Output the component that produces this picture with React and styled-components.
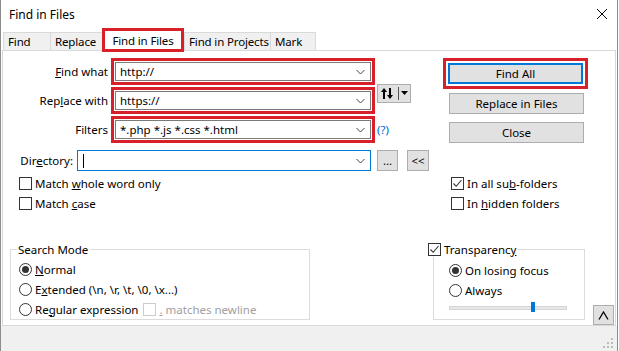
import React from 'react'
import styled, { createGlobalStyle, css } from 'styled-components'

const GlobalStyle = createGlobalStyle`
  html, body {
    margin: 0;
    padding: 0;
    background: #fff;
  }
  body {
    font-family: "Noto Sans", "Open Sans", sans-serif;
    font-size: 11.5px;
    color: #000;
  }
`

const RED = '#d7202a'

const Window = styled.div`
  width: 618px;
  height: 351px;
  box-sizing: border-box;
  border-left: 1px solid #8c8c8c;
  border-right: 1px solid #8c8c8c;
  display: flex;
  flex-direction: column;
  background: #fff;
  overflow: hidden;
`

const TitleBar = styled.div`
  height: 28px;
  flex: none;
  display: flex;
  align-items: center;
  justify-content: space-between;
  padding: 0 9px 0 8px;
  font-size: 12px;
`

const TabStrip = styled.div`
  height: 22px;
  flex: none;
  display: flex;
  align-items: flex-end;
  padding-left: 2px;
`

const Tab = styled.div`
  box-sizing: border-box;
  width: ${p => p.$w}px;
  height: 18px;
  border-top: 1px solid #d9d9d9;
  border-left: 1px solid #d9d9d9;
  border-right: ${p => (p.$last ? '1px solid #d9d9d9' : 'none')};
  background: #f0f0f0;
  padding-left: 4px;
  letter-spacing: -0.15px;
  display: flex;
  align-items: center;
  white-space: nowrap;
  ${p =>
    p.$active &&
    css`
      height: 24px;
      border: 3px solid ${RED};
      background: #fff;
      padding-left: 0;
      justify-content: center;
      margin-bottom: -2px;
      position: relative;
      z-index: 1;
    `}
`

const Panel = styled.div`
  flex: 1;
  margin: 0 1px 0 1px;
  border: 1px solid #d9d9d9;
  display: flex;
  flex-direction: column;
`

const TopArea = styled.div`
  display: flex;
  padding-top: 7px;
`

const LeftCol = styled.div`
  width: 440px;
  display: flex;
  flex-direction: column;
`

const FieldGrid = styled.div`
  display: grid;
  grid-template-columns: 108px 264px auto;
  grid-template-rows: 27px 27px 27px;
  row-gap: 2px;
`

const Label = styled.div`
  display: flex;
  align-items: center;
  justify-content: flex-end;
  padding-right: ${p => p.$pr ?? 3}px;
  width: ${p => (p.$w ? `${p.$w}px` : 'auto')};
  box-sizing: border-box;
  white-space: nowrap;
`

const Highlight = styled.div`
  box-sizing: border-box;
  border: 3px solid ${RED};
  padding: ${p => p.$pad ?? 1}px;
  margin-left: ${p => p.$ml ?? 0}px;
  display: flex;
  flex-direction: column;
`

const Combo = styled.div`
  box-sizing: border-box;
  height: ${p => p.$h ?? 19}px;
  width: ${p => (p.$w ? `${p.$w}px` : 'auto')};
  margin-left: ${p => p.$ml ?? 0}px;
  border: 1px solid ${p => (p.$focus ? '#0078d7' : '#7a7a7a')};
  background: #fff;
  display: flex;
  align-items: center;
  padding: 0 5px 0 4px;
  gap: 4px;
`

const ComboText = styled.div`
  flex: 1;
  display: flex;
  align-items: center;
  white-space: nowrap;
`

const Caret = styled.div`
  width: 1px;
  height: 14px;
  background: #000;
  margin-left: 1px;
`

const Chevron = () => (
  <svg width="9" height="6" viewBox="0 0 9 6">
    <path d="M0.5 1 L4.5 5 L8.5 1" fill="none" stroke="#444" strokeWidth="1" />
  </svg>
)

const GrayButton = styled.button`
  box-sizing: border-box;
  width: ${p => p.$w}px;
  height: ${p => p.$h ?? 21}px;
  margin: 0;
  margin-left: ${p => p.$ml ?? 0}px;
  margin-top: ${p => p.$mt ?? 0}px;
  padding: 0;
  background: #e1e1e1;
  border: ${p => (p.$default ? '2px solid #0078d7' : '1px solid #adadad')};
  font: inherit;
  color: #000;
  display: flex;
  align-items: center;
  justify-content: center;
`

const SwapButton = styled(GrayButton)`
  grid-column: 3;
  grid-row: 1 / span 2;
  align-self: start;
  margin-top: 26px;
  margin-left: 2px;
`

const HelpLink = styled.span`
  grid-column: 3;
  grid-row: 3;
  align-self: center;
  margin-left: 2px;
  color: #0066cc;
`

const DirRow = styled.div`
  display: flex;
  align-items: center;
  height: 21px;
  margin-top: 7px;
`

const RightCol = styled.div`
  display: flex;
  flex-direction: column;
  align-items: flex-start;
  padding-left: 6px;
`

const CheckArea = styled.div`
  display: grid;
  grid-template-columns: 448px auto;
  margin-top: 2px;
`

const CheckGroup = styled.div`
  display: flex;
  flex-direction: column;
  padding-left: ${p => p.$pl ?? 0}px;
`

const OptionRow = styled.div`
  height: 20px;
  display: flex;
  align-items: center;
  gap: 3px;
  white-space: nowrap;
  color: ${p => (p.$disabled ? '#a0a0a0' : '#000')};
`

const Box = styled.span`
  box-sizing: border-box;
  width: 13px;
  height: 13px;
  flex: none;
  border: 1px solid ${p => (p.$disabled ? '#cccccc' : '#333')};
  background: #fff;
  display: flex;
  align-items: center;
  justify-content: center;
  margin-left: ${p => p.$ml ?? 0}px;
`

const Round = styled(Box)`
  border-radius: 50%;
  &::after {
    content: '';
    display: ${p => (p.$on ? 'block' : 'none')};
    width: 7px;
    height: 7px;
    border-radius: 50%;
    background: #333;
  }
`

const Check = ({ on, disabled, ml }) => (
  <Box $disabled={disabled} $ml={ml}>
    {on && (
      <svg width="11" height="11" viewBox="0 0 11 11">
        <path d="M1.5 5.5 L4.2 8.3 L9.5 2" fill="none" stroke="#333" strokeWidth="1.1" />
      </svg>
    )}
  </Box>
)

const Option = ({ control, children, disabled }) => (
  <OptionRow $disabled={disabled}>
    {control}
    <span>{children}</span>
  </OptionRow>
)

const BottomArea = styled.div`
  display: flex;
  align-items: flex-start;
  margin-top: 36px;
`

const GroupBox = styled.div`
  position: relative;
  box-sizing: border-box;
  width: ${p => p.$w}px;
  height: 71px;
  margin-left: ${p => p.$ml}px;
  border: 1px solid #dcdcdc;
  padding: 10px 0 0 ${p => p.$pl}px;
  display: flex;
  flex-direction: column;
`

const Legend = styled.div`
  position: absolute;
  top: -9px;
  left: ${p => p.$left}px;
  height: 16px;
  padding: 0 2px 0 1px;
  background: #fff;
  display: flex;
  align-items: center;
  gap: 3px;
  white-space: nowrap;
`

const Slider = styled.div`
  position: relative;
  width: 118px;
  height: 16px;
  display: flex;
  align-items: center;
`

const Track = styled.div`
  width: 100%;
  height: 4px;
  box-sizing: border-box;
  background: #e7e7e7;
  border: 1px solid #d6d6d6;
`

const Thumb = styled.div`
  position: absolute;
  left: 82px;
  top: 2px;
  width: 4px;
  height: 10px;
  background: #0078d7;
`

const CollapseButton = styled(GrayButton)`
  margin-left: auto;
  margin-right: 1px;
  margin-top: 56px;
`

const StatusBar = styled.div`
  height: 23px;
  flex: none;
  background: #f0f0f0;
  display: flex;
  justify-content: flex-end;
  align-items: flex-end;
  padding: 0 3px 2px 0;
`

const U = styled.span`
  text-decoration: underline;
`

const Grip = () => (
  <svg width="11" height="11" viewBox="0 0 11 11">
    {[
      [8, 0],
      [4, 4],
      [8, 4],
      [0, 8],
      [4, 8],
      [8, 8]
    ].map(([x, y]) => (
      <rect key={`${x}-${y}`} x={x} y={y} width="2" height="2" fill="#bcbcbc" />
    ))}
  </svg>
)

const Field = ({ value }) => (
  <Highlight>
    <Combo>
      <ComboText>{value}</ComboText>
      <Chevron />
    </Combo>
  </Highlight>
)

export default function App() {
  return (
    <>
      <GlobalStyle />
      <Window>
        <TitleBar>
          <span>Find in Files</span>
          <svg width="12" height="12" viewBox="0 0 12 12">
            <path d="M1 1 L11 11 M11 1 L1 11" stroke="#000" strokeWidth="1" />
          </svg>
        </TitleBar>

        <TabStrip>
          <Tab $w={47}>Find</Tab>
          <Tab $w={52}>Replace</Tab>
          <Tab $w={82} $active>Find in Files</Tab>
          <Tab $w={86}>Find in Projects</Tab>
          <Tab $w={46} $last>Mark</Tab>
        </TabStrip>

        <Panel>
          <TopArea>
            <LeftCol>
              <FieldGrid>
                <Label><span><U>F</U>ind what</span></Label>
                <Field value="http://" />
                <SwapButton $w={34} $h={19}>
                  <svg width="30" height="15" viewBox="0 0 30 15">
                    <path d="M5 2 L2 6 L4 6 L4 13 L6 13 L6 6 L8 6 Z" fill="#000" />
                    <path d="M11 13 L14 9 L12 9 L12 2 L10 2 L10 9 L8 9 Z" fill="#000" />
                    <rect x="19" y="1" width="1" height="13" fill="#555" />
                    <path d="M22 5 L29 5 L25.5 9 Z" fill="#000" />
                  </svg>
                </SwapButton>
                <Label><span>Rep<U>l</U>ace with</span></Label>
                <Field value="https://" />
                <Label>Filters</Label>
                <Field value="*.php *.js *.css *.html" />
                <HelpLink>(?)</HelpLink>
              </FieldGrid>

              <DirRow>
                <Label $w={72} $pr={2}><span>Dir<U>e</U>ctory:</span></Label>
                <Combo $h={21} $w={294} $ml={2} $focus>
                  <ComboText><Caret /></ComboText>
                  <Chevron />
                </Combo>
                <GrayButton $w={21} $ml={6}>...</GrayButton>
                <GrayButton $w={22} $ml={9}>&lt;&lt;</GrayButton>
              </DirRow>
            </LeftCol>

            <RightCol>
              <Highlight $pad={2} $ml={-6}>
                <GrayButton $w={135} $default>Find All</GrayButton>
              </Highlight>
              <GrayButton $w={135} $mt={4}>Replace in Files</GrayButton>
              <GrayButton $w={135} $mt={8}>Close</GrayButton>
            </RightCol>
          </TopArea>

          <CheckArea>
            <CheckGroup $pl={16}>
              <Option control={<Check />}>Match <U>w</U>hole word only</Option>
              <Option control={<Check />}>Match <U>c</U>ase</Option>
            </CheckGroup>
            <CheckGroup>
              <Option control={<Check on />}>In all su<U>b</U>-folders</Option>
              <Option control={<Check />}>In <U>h</U>idden folders</Option>
            </CheckGroup>
          </CheckArea>

          <BottomArea>
            <GroupBox $w={300} $ml={7} $pl={8}>
              <Legend $left={6}>Search Mode</Legend>
              <Option control={<Round $on />}><U>N</U>ormal</Option>
              <Option control={<Round />}>E<U>x</U>tended (\n, \r, \t, \0, \x...)</Option>
              <OptionRow>
                <Round />
                <span>Re<U>g</U>ular expression</span>
                <Option disabled control={<Check disabled ml={2} />}>
                  <U>.</U> matches newline
                </Option>
              </OptionRow>
            </GroupBox>

            <GroupBox $w={152} $ml={123} $pl={15}>
              <Legend $left={-7}>
                <Check on />
                <span>Transparenc<U>y</U></span>
              </Legend>
              <Option control={<Round $on />}>On losing focus</Option>
              <Option control={<Round />}>Always</Option>
              <Slider>
                <Track />
                <Thumb />
              </Slider>
            </GroupBox>

            <CollapseButton $w={21} $h={20}>
              <svg width="11" height="9" viewBox="0 0 11 9">
                <path d="M1 8.5 L5.5 1 L10 8.5" fill="none" stroke="#000" strokeWidth="1.3" />
              </svg>
            </CollapseButton>
          </BottomArea>
        </Panel>

        <StatusBar>
          <Grip />
        </StatusBar>
      </Window>
    </>
  )
}
